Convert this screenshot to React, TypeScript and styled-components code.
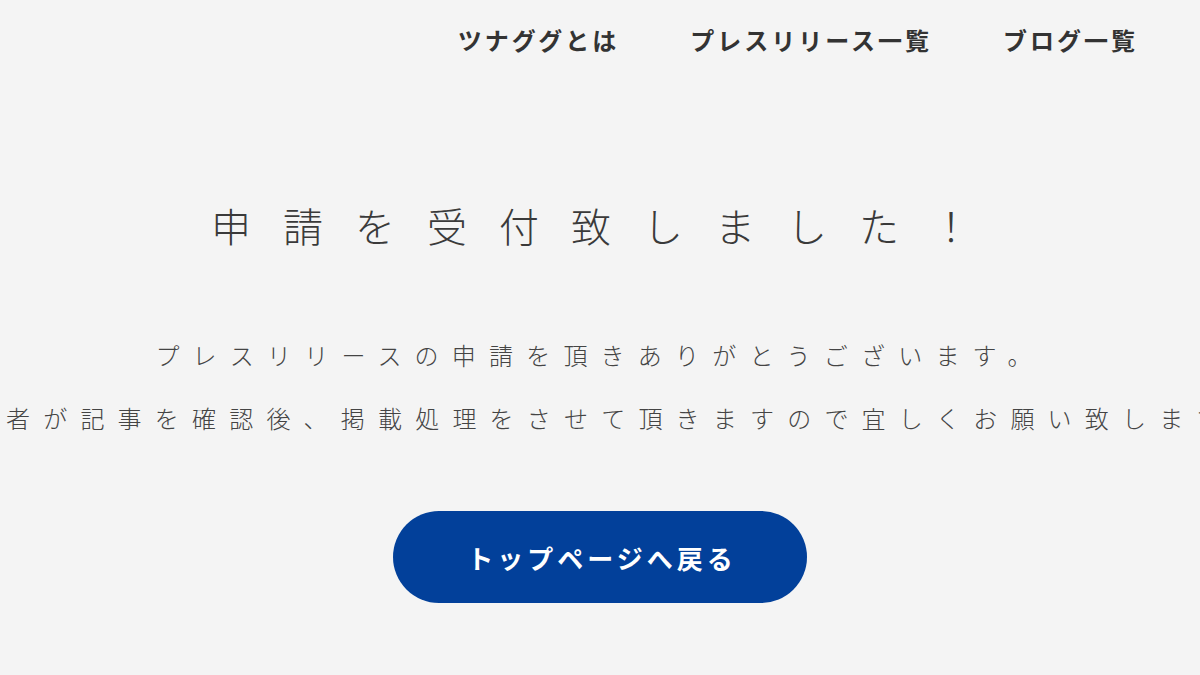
import * as React from "react";
import styled, { createGlobalStyle } from "styled-components";

const GlobalStyle = createGlobalStyle`
  html, body {
    margin: 0;
    padding: 0;
    background: #f4f4f4;
    overflow: hidden;
  }
  body {
    font-family: "Noto Sans CJK JP", "Noto Sans", sans-serif;
    color: #333;
  }
`;

const Page = styled.div`
  width: 1200px;
  height: 675px;
  overflow: hidden;
  background: #f4f4f4;
`;

const Header = styled.header`
  height: 78px;
  display: flex;
  justify-content: flex-end;
  align-items: center;
  gap: 71px;
  padding-right: 62px;
`;

const NavLink = styled.a`
  font-size: 24px;
  font-weight: 700;
  letter-spacing: 3px;
  color: #333;
  text-decoration: none;
  cursor: pointer;
`;

const Main = styled.main`
  display: flex;
  flex-direction: column;
  align-items: center;
`;

const Title = styled.h1`
  margin: 117px 0 0;
  padding-left: 14px;
  font-size: 40px;
  line-height: 60px;
  font-weight: 300;
  letter-spacing: 32px;
  color: #3a3a3a;
  white-space: nowrap;
`;

const Message = styled.div`
  margin-top: 68px;
  display: flex;
  flex-direction: column;
  align-items: center;
`;

const Line = styled.p`
  margin: 0;
  font-size: 24px;
  line-height: 63px;
  font-weight: 300;
  letter-spacing: 13.2px;
  color: #444;
  white-space: nowrap;
`;

const BackButton = styled.a`
  margin-top: 62px;
  width: 414px;
  height: 92px;
  border-radius: 46px;
  background: #02409a;
  color: #fff;
  display: flex;
  align-items: center;
  justify-content: center;
  padding-left: 4px;
  box-sizing: border-box;
  font-size: 26px;
  font-weight: 700;
  letter-spacing: 4px;
  text-decoration: none;
  cursor: pointer;
`;

function App() {
  return (
    <Page>
      <GlobalStyle />
      <Header>
        <NavLink>ツナググとは</NavLink>
        <NavLink>プレスリリース一覧</NavLink>
        <NavLink>ブログ一覧</NavLink>
      </Header>
      <Main>
        <Title>申請を受付致しました！</Title>
        <Message>
          <Line>プレスリリースの申請を頂きありがとうございます。</Line>
          <Line>
            担当者が記事を確認後、掲載処理をさせて頂きますので宜しくお願い致します。
          </Line>
        </Message>
        <BackButton>トップページへ戻る</BackButton>
      </Main>
    </Page>
  );
}

export default App;
